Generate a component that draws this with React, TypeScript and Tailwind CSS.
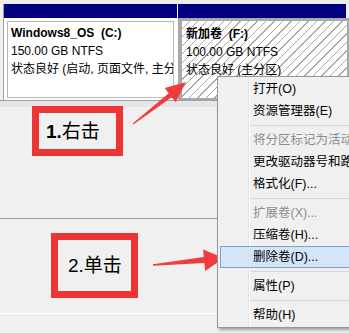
const font = "font-[family-name:'Liberation_Sans','Noto_Sans_CJK_SC',sans-serif]";

type MenuEntry = { label?: string; disabled?: boolean; active?: boolean; sep?: boolean };

const menu: MenuEntry[] = [
  { label: '打开(O)' },
  { label: '资源管理器(E)' },
  { sep: true },
  { label: '将分区标记为活动分区(M)', disabled: true },
  { label: '更改驱动器号和路径(C)...' },
  { label: '格式化(F)...' },
  { sep: true },
  { label: '扩展卷(X)...', disabled: true },
  { label: '压缩卷(H)...' },
  { label: '删除卷(D)...', active: true },
  { sep: true },
  { label: '属性(P)' },
  { sep: true },
  { label: '帮助(H)' },
];

function ContextMenu() {
  return (
    <div className="absolute left-[217px] top-[76px] h-[252px] w-[150px] border border-[#979797] bg-[#f0f0f0] pt-[1px] shadow-[2px_2px_3px_rgba(0,0,0,0.35)]">
      <div className="absolute bottom-[2px] left-[30px] top-[2px] w-px bg-[#e2e3e3]" />
      <div className="absolute bottom-[2px] left-[31px] top-[2px] w-px bg-white" />
      {menu.map((item, i) =>
        item.sep ? (
          <div key={i} className="relative flex h-[7px] items-center pl-[32px]">
            <div className="h-[2px] flex-1 border-t border-[#d7d7d7] border-b-white" />
          </div>
        ) : item.active ? (
          <div key={i} className="relative mx-[2px] flex h-[22px] items-center whitespace-nowrap border border-[#7da2ce] bg-[#d4e5f7] pl-[32px] text-[12.5px]">
            {item.label}
          </div>
        ) : (
          <div
            key={i}
            className={`relative flex h-[22px] items-center whitespace-nowrap pl-[35px] text-[12.5px] ${item.disabled ? 'text-[#8d8d8d]' : 'text-black'}`}
          >
            {item.label}
          </div>
        ),
      )}
    </div>
  );
}

function Arrows() {
  return (
    <svg className="pointer-events-none absolute inset-0" width="349" height="333">
      <polygon
        fill="#f03c3c"
        points="132.7,123.6 168.7,93.2 164.7,88.1 186,82 175.7,102.3 171.7,97.2 133.3,124.4"
      />
      <polygon
        fill="#f03c3c"
        points="152.9,264.3 203.8,257 203.1,249.5 224,258 205.1,271 204.4,263 153.1,265.7"
      />
    </svg>
  );
}

export default function App() {
  return (
    <div className={`relative h-[333px] w-[349px] overflow-hidden bg-[#f0f0f0] text-[12px] text-black ${font}`}>
      <div className="h-[4px] bg-[#ececec]" />
      <div className="flex h-[97px] border-b border-[#a0a0a0]">
        <div className="w-[3px]" />
        <div className="flex w-[174px] flex-col border-l border-[#a0a0a0] bg-white">
          <div className="h-[14px] bg-[#000080]" />
          <div className="flex-1 px-[3px] pt-[3px] pb-[2px]">
            <div className="h-full overflow-hidden whitespace-nowrap border border-[#b9b9b9] pl-[3px] pt-[2px] leading-[18px]">
              <div className="font-bold">Windows8_OS&nbsp;&nbsp;(C:)</div>
              <div>150.00 GB NTFS</div>
              <div>状态良好 (启动, 页面文件, 主分区)</div>
            </div>
          </div>
        </div>
        <div className="w-px bg-white" />
        <div className="flex flex-1 flex-col">
          <div className="mr-[3px] h-[14px] bg-[#000080]" />
          <div className="flex-1 bg-[#a9a9a9] pb-[2px] pl-[4px] pr-[2px] pt-[3px]">
            <div className="h-full overflow-hidden whitespace-nowrap bg-[repeating-linear-gradient(135deg,#ffffff_0px,#ffffff_5px,#a8a8a8_5px,#a8a8a8_6px)] pl-[4px] pt-[4px] leading-[18px]">
              <div className="font-bold">新加卷&nbsp;&nbsp;(F:)</div>
              <div>100.00 GB NTFS</div>
              <div>状态良好 (主分区)</div>
            </div>
          </div>
        </div>
      </div>
      <div className="h-[6px] bg-[#e6e6e6]" />
      <div className="h-[112px] border-b border-[#a0a0a0]" />
      <div className="h-[95px] border-b border-white" />

      <div className="absolute left-[32px] top-[106px] flex h-[50px] w-[91px] items-center border-[7px] border-[#ee3535] pl-[7px] text-[19px] leading-none">
        <span className="font-bold">1.</span>
        <span>右击</span>
      </div>
      <div className="absolute left-[51px] top-[233px] flex h-[65px] w-[87px] items-center border-[7px] border-[#ee3535] pl-[10px] text-[19px] leading-none">
        <span>2.</span>
        <span>单击</span>
      </div>

      <Arrows />
      <ContextMenu />
    </div>
  );
}
